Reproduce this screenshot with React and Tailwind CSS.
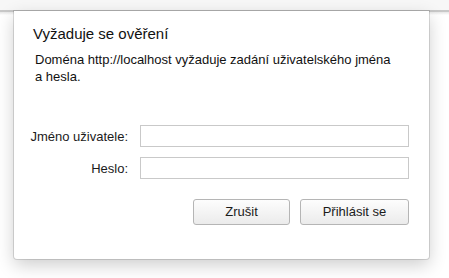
import React from "react";

const font = { fontFamily: '"Liberation Sans", Arial, sans-serif' };

function Field({ label, type = "text" }) {
  return (
    <div className="flex items-center">
      <label className="w-[114px] shrink-0 text-right text-[13px] leading-[17px] text-[#1b1b1b]">
        {label}
      </label>
      <input
        type={type}
        className="ml-[12px] h-[22px] flex-1 border border-[#c9c9c9] bg-white outline-none"
      />
    </div>
  );
}

export default function App() {
  return (
    <div
      className="relative h-[278px] w-[449px] overflow-hidden bg-white"
      style={font}
    >
      {/* browser chrome edge behind the sheet */}
      <div className="h-[10px] bg-[#f7f7f7]" />
      <div className="h-[2px] bg-[#c8c8c8]" />
      <div className="h-[3px] bg-gradient-to-b from-[#e6e6e6] to-white" />

      <div className="absolute left-[14px] top-[11px] flex h-[248px] w-[415px] flex-col rounded-b-[3px] bg-white pt-[14px] pr-[20px] shadow-[0_0_0_1px_rgba(0,0,0,0.13),0_6px_18px_rgba(0,0,0,0.2)]">
        <h1 className="pl-[19px] text-[15px] leading-[18px] text-[#111]">
          Vyžaduje se ověření
        </h1>
        <p className="mt-[8px] whitespace-nowrap pl-[21px] text-[13px] leading-[17px] text-[#111]">
          Doména http://localhost vyžaduje zadání uživatelského jména
          <br />a hesla.
        </p>

        <div className="mt-[40px] flex flex-col gap-[10px]">
          <Field label="Jméno uživatele:" />
          <Field label="Heslo:" type="password" />
        </div>

        <div className="mt-[20px] flex justify-end gap-[10px]">
          <button className="h-[26px] w-[97px] rounded-[3px] border border-[#b5b5b5] bg-gradient-to-b from-[#fdfdfd] to-[#ebebeb] text-[13px] text-[#1b1b1b]">
            Zrušit
          </button>
          <button className="h-[26px] w-[109px] rounded-[3px] border border-[#b5b5b5] bg-gradient-to-b from-[#fdfdfd] to-[#ebebeb] text-[13px] text-[#1b1b1b]">
            Přihlásit se
          </button>
        </div>
      </div>
    </div>
  );
}
